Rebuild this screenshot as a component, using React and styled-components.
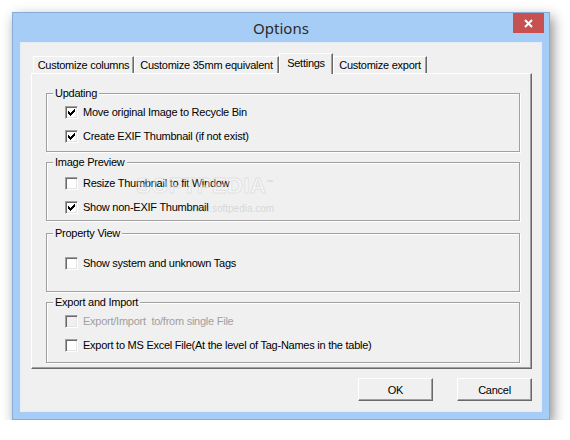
import React from 'react'
import styled, { createGlobalStyle } from 'styled-components'

const GlobalStyle = createGlobalStyle`
  body {
    margin: 0;
    background: #fff;
    font-family: "Liberation Sans", Arial, sans-serif;
  }
`

const Window = styled.div`
  box-sizing: border-box;
  display: flex;
  flex-direction: column;
  width: 538px;
  height: 408px;
  margin: 12px 0 0 12px;
  padding: 0 7px 7px 7px;
  background: #a6cdf5;
  border: 1px solid #86acd8;
  box-shadow: 3px 5px 12px rgba(0, 0, 0, 0.45);
`

const TitleBar = styled.div`
  display: grid;
  grid-template-columns: 1fr auto 1fr;
  height: 29px;
`

const Title = styled.div`
  grid-column: 2;
  font-family: "Noto Sans", "Open Sans", sans-serif;
  font-size: 15px;
  line-height: 31px;
  color: #2a2a2a;
`

const Close = styled.div`
  grid-column: 3;
  justify-self: end;
  display: flex;
  align-items: center;
  justify-content: center;
  width: 31px;
  height: 20px;
  margin-right: -2px;
  background: #c75050;
`

const Client = styled.div`
  box-sizing: border-box;
  flex: 1;
  display: flex;
  flex-direction: column;
  padding: 10px 9px 0 10px;
  background: #f0f0f0;
  border: 1px solid #e6edf6;
  font-size: 11px;
  letter-spacing: -0.25px;
`

const TabRow = styled.div`
  display: flex;
  align-items: flex-end;
  height: 20px;
  padding-left: 2px;
`

const Tab = styled.div`
  box-sizing: border-box;
  position: relative;
  z-index: ${p => (p.active ? 2 : 0)};
  display: flex;
  align-items: center;
  justify-content: center;
  width: ${p => p.w}px;
  height: ${p => (p.active ? 21 : 17)}px;
  margin-bottom: ${p => (p.active ? -1 : 0)}px;
  padding-bottom: ${p => (p.active ? 2 : 0)}px;
  background: #f0f0f0;
  border-top: 1px solid #fff;
  border-left: 1px solid #fff;
  border-right: 1px solid #696969;
  box-shadow: inset -1px 0 0 #a0a0a0;
  color: #000;
  white-space: nowrap;
`

const Panel = styled.div`
  box-sizing: border-box;
  position: relative;
  display: flex;
  flex-direction: column;
  height: 296px;
  padding: 19px 11px 0 14px;
  border-top: 1px solid #fff;
  border-left: 1px solid #fff;
  border-right: 1px solid #696969;
  border-bottom: 1px solid #696969;
  box-shadow: inset -1px -1px 0 #a0a0a0;
`

const Group = styled.div`
  box-sizing: border-box;
  display: flex;
  flex-direction: column;
  height: ${p => p.h}px;
  margin-top: ${p => p.mt || 0}px;
  border: 1px solid #a0a0a0;
  box-shadow: inset 1px 1px 0 #fff, 1px 1px 0 #fff;
`

const Legend = styled.div`
  align-self: flex-start;
  height: 13px;
  margin: -7px 0 ${p => p.gap || 0}px 6px;
  padding: 0 2px;
  background: #f0f0f0;
  line-height: 13px;
  color: #000;
`

const Row = styled.label`
  display: flex;
  align-items: center;
  gap: 5px;
  height: 24px;
  padding-left: 18px;
  color: ${p => (p.disabled ? '#a0a0a0' : '#000')};
`

const Box = styled.span`
  box-sizing: border-box;
  display: flex;
  align-items: center;
  justify-content: center;
  width: 13px;
  height: 13px;
  background: ${p => (p.disabled ? '#f0f0f0' : '#fff')};
  border-top: 1px solid #a0a0a0;
  border-left: 1px solid #a0a0a0;
  border-right: 1px solid #fff;
  border-bottom: 1px solid #fff;
  box-shadow: inset 1px 1px 0 #696969, inset -1px -1px 0 #e3e3e3;
`

const Buttons = styled.div`
  display: flex;
  justify-content: flex-end;
  gap: 24px;
  margin-top: 9px;
`

const Button = styled.div`
  box-sizing: border-box;
  display: flex;
  align-items: center;
  justify-content: center;
  width: 75px;
  height: 23px;
  background: #f0f0f0;
  border-top: 1px solid #fff;
  border-left: 1px solid #fff;
  border-right: 1px solid #696969;
  border-bottom: 1px solid #696969;
  box-shadow: inset -1px -1px 0 #a0a0a0;
  color: #000;
`

const Watermark = styled.div`
  position: absolute;
  left: 104px;
  top: 99px;
  pointer-events: none;
  letter-spacing: 0;
`

const Brand = styled.div`
  font-weight: bold;
  font-size: 22px;
  letter-spacing: 0.5px;
  color: rgba(255, 255, 255, 0.4);
  -webkit-text-stroke: 1px rgba(160, 160, 160, 0.22);

  sup {
    font-size: 7px;
    -webkit-text-stroke: 0;
    color: rgba(150, 150, 150, 0.35);
  }
`

const Url = styled.div`
  margin: 4px 0 0 52px;
  font-size: 10px;
  color: rgba(150, 150, 150, 0.3);
`

const Check = () => (
  <svg width="7" height="7" viewBox="0 0 7 7">
    <path d="M0 2h1v1h1v1h1V3h1V2h1V1h1V0h1v3H6v1H5v1H4v1H3v1H2V6H1V5H0z" fill="#000" />
  </svg>
)

const CheckRow = ({ checked, disabled, children }) => (
  <Row disabled={disabled}>
    <Box disabled={disabled}>{checked && <Check />}</Box>
    {children}
  </Row>
)

const tabs = [
  { name: 'Customize columns', w: 101 },
  { name: 'Customize 35mm equivalent', w: 145 },
  { name: 'Settings', w: 54, active: true },
  { name: 'Customize export', w: 94 },
]

export default function App() {
  return (
    <>
      <GlobalStyle />
      <Window>
        <TitleBar>
          <Title>Options</Title>
          <Close>
            <svg width="9" height="9" viewBox="0 0 9 9">
              <path d="M1 1l7 7M8 1L1 8" stroke="#fff" strokeWidth="2" />
            </svg>
          </Close>
        </TitleBar>
        <Client>
          <TabRow>
            {tabs.map(t => (
              <Tab key={t.name} w={t.w} active={t.active}>
                {t.name}
              </Tab>
            ))}
          </TabRow>
          <Panel>
            <Group h={59}>
              <Legend>Updating</Legend>
              <CheckRow checked>Move original Image to Recycle Bin</CheckRow>
              <CheckRow checked>Create EXIF Thumbnail (if not exist)</CheckRow>
            </Group>
            <Group h={59} mt={10}>
              <Legend gap={2}>Image Preview</Legend>
              <CheckRow>Resize Thumbnail to fit Window</CheckRow>
              <CheckRow checked>Show non-EXIF Thumbnail</CheckRow>
            </Group>
            <Group h={59} mt={12}>
              <Legend gap={11}>Property View</Legend>
              <CheckRow>Show system and unknown Tags</CheckRow>
            </Group>
            <Group h={61} mt={10}>
              <Legend>Export and Import</Legend>
              <CheckRow disabled>Export/Import&nbsp; to/from single File</CheckRow>
              <CheckRow>Export to MS Excel File(At the level of Tag-Names in the table)</CheckRow>
            </Group>
            <Watermark>
              <Brand>
                SOFTPEDIA<sup>™</sup>
              </Brand>
              <Url>www.softpedia.com</Url>
            </Watermark>
          </Panel>
          <Buttons>
            <Button>OK</Button>
            <Button>Cancel</Button>
          </Buttons>
        </Client>
      </Window>
    </>
  )
}
